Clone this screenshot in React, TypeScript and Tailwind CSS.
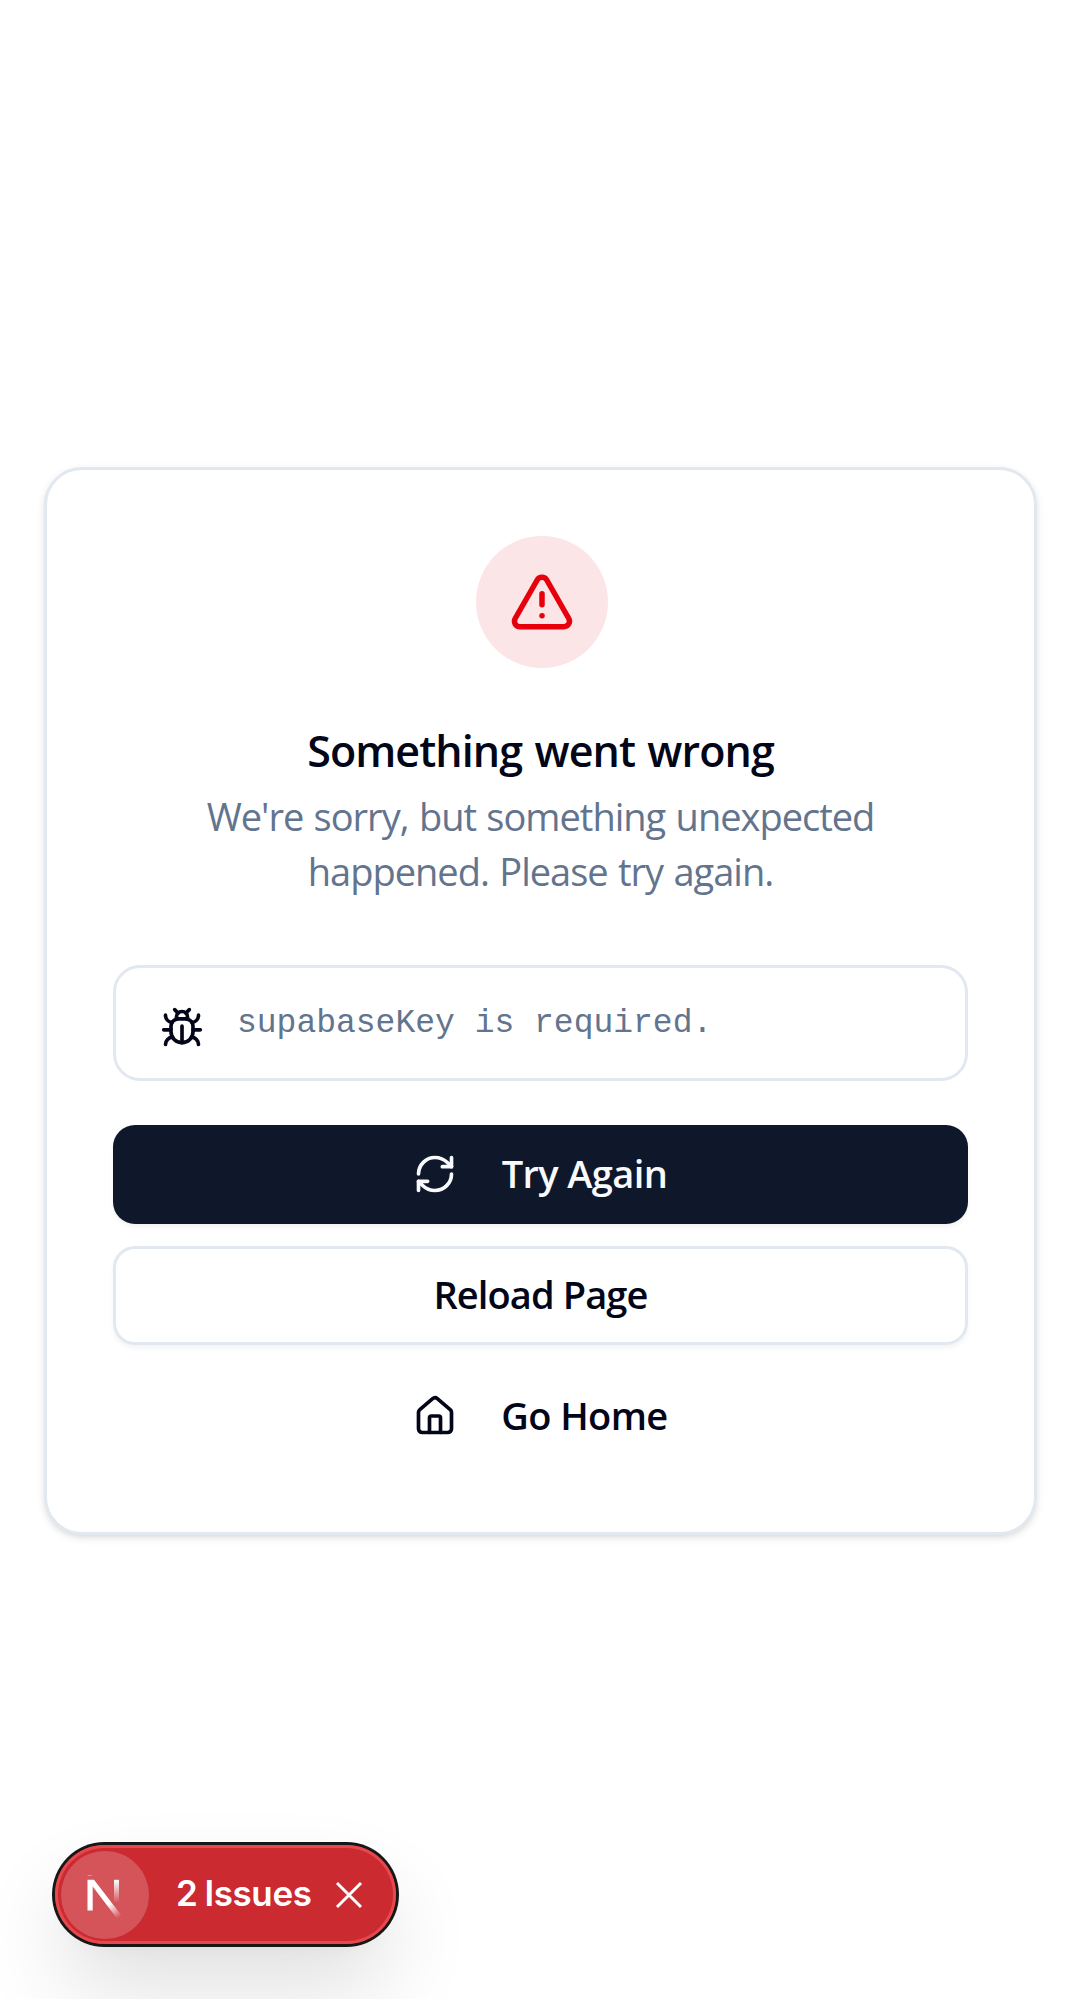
import { Bug, House, RefreshCw, TriangleAlert } from "lucide-react";

function NextLogo() {
  return (
    <svg width="44" height="50" viewBox="0 0 44 50" fill="none">
      <defs>
        <linearGradient id="diag" x1="27" y1="33" x2="37" y2="47" gradientUnits="userSpaceOnUse">
          <stop stopColor="white" />
          <stop offset="1" stopColor="white" stopOpacity="0" />
        </linearGradient>
        <linearGradient id="stem" x1="0" y1="10" x2="0" y2="33" gradientUnits="userSpaceOnUse">
          <stop stopColor="white" />
          <stop offset="1" stopColor="white" stopOpacity="0" />
        </linearGradient>
      </defs>
      <path d="M4.500 9.800h6.500L38.500 45.500l-4.300 3.300L9.700 16.500V40.500H4.500z" fill="url(#diag)" />
      <path d="M31 9.800h5v23h-5z" fill="url(#stem)" />
      <path d="M4.800 5.500h4" stroke="white" strokeOpacity="0.35" />
    </svg>
  );
}

export default function App() {
  return (
    <div className="flex h-[1999px] w-[1081px] flex-col overflow-hidden bg-white font-['Open_Sans',sans-serif] text-[#020618]">
      <div className="mx-[44px] mt-[467px] flex h-[1068px] flex-col rounded-[38px] border-[3px] border-[#e2e8f0] bg-white p-[66px] shadow-[0_3px_8px_rgba(0,0,0,0.1),0_3px_6px_-3px_rgba(0,0,0,0.1)]">
        <div className="ml-[363px] flex size-[132px] shrink-0 items-center justify-center rounded-full bg-[#fbe5e7] text-[#e7000b]">
          <TriangleAlert size={66} strokeWidth={2} />
        </div>
        <h1 className="mt-[61px] text-center text-[43px] leading-[44px] font-semibold tracking-[-0.9px] [word-spacing:2px] whitespace-nowrap">
          Something went wrong
        </h1>
        <p className="mt-[16px] text-center text-[38px] leading-[55px] tracking-[-1px] [word-spacing:1.5px] whitespace-nowrap text-[#62748e]">
          We're sorry, but something unexpected
          <br />
          happened. Please try again.
        </p>
        <div className="mt-[66px] flex h-[116px] shrink-0 items-center rounded-[27px] border-[3px] border-[#e2e8f0] pl-[44px]">
          <Bug size={44} className="mt-2.5" />
          <span className="mt-0.5 ml-[33px] font-['Liberation_Mono',monospace] text-[33px] text-[#62748e]">
            supabaseKey is required.
          </span>
        </div>
        <div className="mt-[44px] flex flex-col gap-[22px] text-[38px] leading-[55px] font-semibold tracking-[-0.6px]">
          <button className="flex h-[99px] items-center justify-center gap-[44px] rounded-[22px] bg-[#0f172b] pb-0.5 text-[#f8fafc] shadow-[0_3px_5px_rgba(0,0,0,0.05)]">
            <RefreshCw size={44} />
            <span className="w-[168px] whitespace-nowrap">Try Again</span>
          </button>
          <button className="flex h-[99px] items-center justify-center rounded-[22px] border-[3px] border-[#e2e8f0] bg-white pb-0.5 shadow-[0_3px_5px_rgba(0,0,0,0.05)]">
            <span className="tracking-[-0.9px]">Reload Page</span>
          </button>
          <button className="flex h-[99px] items-center justify-center gap-[44px] pb-0.5">
            <House size={44} />
            <span className="w-[168px] whitespace-nowrap">Go Home</span>
          </button>
        </div>
      </div>
      <div className="mt-[310px] ml-[55px] flex h-[99px] w-[341px] shrink-0 items-center rounded-full bg-[#ca2a30] pl-[6px] font-['Inter',sans-serif] text-white shadow-[0_0_0_3px_#171717,inset_0_0_0_3px_#e5484d,0_44px_88px_-5px_rgba(0,0,0,0.14),0_11px_22px_-11px_rgba(0,0,0,0.06)]">
        <div className="flex size-[88px] items-center justify-center rounded-full bg-white/20">
          <NextLogo />
        </div>
        <span className="-mt-0.5 ml-[27px] flex w-[137px] gap-[7px] text-[35px] font-semibold tracking-[-0.4px] whitespace-nowrap">
          <span>2</span>
          <span>Issues</span>
        </span>
        <svg className="ml-[20px]" width="32" height="32" viewBox="0 0 32 32" stroke="white" strokeWidth="3">
          <path d="M4 4L28 28M28 4L4 28" />
        </svg>
      </div>
    </div>
  );
}
